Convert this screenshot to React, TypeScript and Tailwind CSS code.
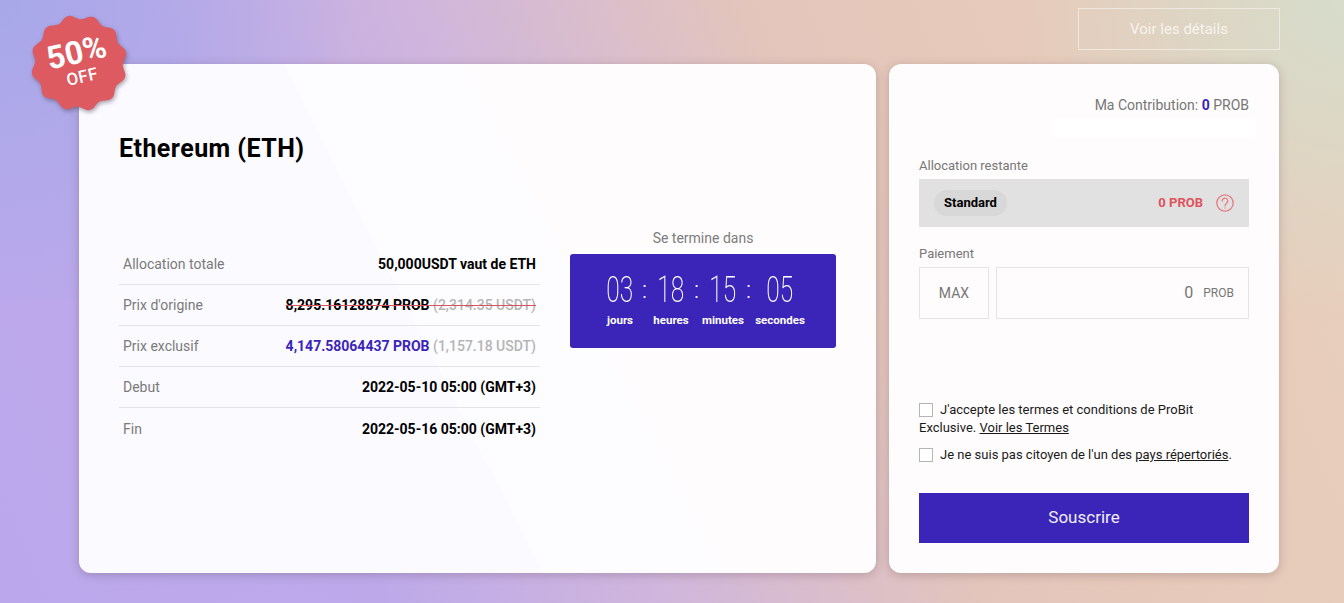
const ROWS = [
  { label: 'Allocation totale', value: <b className="font-bold text-black">50,000USDT vaut de ETH</b> },
  {
    label: "Prix d'origine",
    value: (
      <span className="line-through decoration-[#d9535f]">
        <b className="font-bold text-black">8,295.16128874 PROB</b>{' '}
        <span className="font-medium text-[#b5b5b5]">(2,314.35 USDT)</span>
      </span>
    ),
  },
  {
    label: 'Prix exclusif',
    value: (
      <span>
        <b className="font-bold text-[#3b24b8]">4,147.58064437 PROB</b>{' '}
        <span className="font-medium text-[#b5b5b5]">(1,157.18 USDT)</span>
      </span>
    ),
  },
  { label: 'Debut', value: <b className="font-bold text-black">2022-05-10 05:00 (GMT+3)</b> },
  { label: 'Fin', value: <b className="font-bold text-black">2022-05-16 05:00 (GMT+3)</b> },
];

const TIMER = [
  { num: '03', label: 'jours', width: 'w-[50px]', colon: true },
  { num: '18', label: 'heures', width: 'w-[52px]', colon: true },
  { num: '15', label: 'minutes', width: 'w-[52px]', colon: true },
  { num: '05', label: 'secondes', width: 'w-[62px]', colon: false },
];

// scalloped outline of the discount badge
function badgePath() {
  const pts: string[] = [];
  for (let i = 0; i < 180; i++) {
    const a = (i / 180) * Math.PI * 2;
    const r = 46 + 2.2 * Math.cos(a * 12);
    pts.push(`${(50 + r * Math.cos(a)).toFixed(2)},${(50 + r * Math.sin(a)).toFixed(2)}`);
  }
  return `M${pts.join('L')}Z`;
}

function Badge() {
  return (
    <div className="absolute left-[29px] top-[13px] z-10 h-[100px] w-[100px]">
      <svg viewBox="0 0 100 100" className="h-full w-full drop-shadow-[1px_2px_2px_rgba(60,50,70,0.45)]">
        <path d={badgePath()} fill="#dc5a60" transform="rotate(-13 50 50)" />
      </svg>
      <div className="absolute inset-0 flex -rotate-[13deg] flex-col items-center justify-center pb-[3px] text-white">
        <span className="text-[32px] font-bold leading-[31px]">50%</span>
        <span className="text-[17px] font-medium leading-[19px] tracking-[0.5px]">OFF</span>
      </div>
    </div>
  );
}

function QuestionIcon() {
  return (
    <svg viewBox="0 0 18 18" className="h-[18px] w-[18px]" fill="none" stroke="#e57c83" strokeWidth="1.3" strokeLinecap="round">
      <circle cx="9" cy="9" r="8.2" />
      <path d="M6.2 7.1a2.8 2.8 0 1 1 4.4 2.2c-1 .7-1.6 1.2-1.6 2.4" />
      <path d="M9 13.9v.1" />
    </svg>
  );
}

export default function App() {
  return (
    <div className="relative h-[603px] w-[1344px] overflow-hidden bg-[radial-gradient(circle_at_100%_0%,#d6dccb_0%,rgba(216,220,203,0)_22%),linear-gradient(68deg,#bba8ec_0%,#bda9ea_24%,#d0b6dc_42%,#e3c5bc_62%,#e6c8ba_72%,#e8d0bc_100%)] pl-[79px] pr-[65px] pt-2 font-['Roboto',sans-serif]">
      <div className="pointer-events-none absolute left-0 top-0 h-[300px] w-[400px] bg-[radial-gradient(circle_at_0%_0%,rgba(165,168,232,0.9)_0%,rgba(165,168,232,0)_70%)]" />
      <Badge />

      {/* Top action */}
      <div className="relative mr-[-1px] flex justify-end">
        <button className="h-[42px] w-[202px] border border-[#efe8de] text-[15px] text-[#f7f3ee]">
          Voir les détails
        </button>
      </div>

      <div className="relative mt-[14px] flex h-[509px] gap-[13px]">
        {/* Main card */}
        <div className="flex w-[797px] flex-col rounded-xl bg-[linear-gradient(63deg,#fbfaff_0%,#fbfaff_43.9%,#fdfcff_43.9%,#fdfcff_61%,#fefcfd_61%)] pl-10 pr-10 shadow-[0_2px_10px_rgba(70,50,60,0.25)]">
          <h1 className="mt-[68px] text-[25px] font-bold leading-[34px] tracking-[0.45px] text-black">Ethereum (ETH)</h1>

          <div className="mt-[78px] flex items-start">
            <div className="w-[421px]">
              {ROWS.map((row, i) => (
                <div
                  key={row.label}
                  className={`flex h-[41px] items-center justify-between px-1 text-sm ${i < ROWS.length - 1 ? 'border-b border-[#e4e4e6]' : ''}`}
                >
                  <span className="text-[#7a7a7a]">{row.label}</span>
                  {row.value}
                </div>
              ))}
            </div>

            <div className="ml-[30px] mt-[-15px] w-[266px]">
              <p className="h-[25px] text-center text-sm leading-[19px] text-[#7d7d7d]">Se termine dans</p>
              <div className="h-[94px] rounded-[3px] bg-[#3b24b8] pl-[25px] pt-[17px] text-white">
                <div className="flex">
                  {TIMER.map(t => (
                    <div key={t.label} className={`relative flex flex-col items-center ${t.width}`}>
                      <span className="scale-x-[0.68] text-[36px] font-extralight leading-[38px]">{t.num}</span>
                      <span className="mt-[4px] whitespace-nowrap text-[11.5px] font-bold leading-[14px]">{t.label}</span>
                      {t.colon && (
                        <span className="absolute right-[-2px] top-[3px] text-[24px] font-light leading-[32px]">:</span>
                      )}
                    </div>
                  ))}
                </div>
              </div>
            </div>
          </div>
        </div>

        {/* Subscribe card */}
        <div className="relative flex w-[390px] flex-col rounded-xl bg-[#fefcfc] px-[30px] shadow-[0_2px_10px_rgba(70,50,60,0.25)]">
          <div className="absolute left-[164px] top-[54px] h-[20px] w-[202px] bg-white" />
          <p className="mt-[32px] text-right text-sm leading-[18px] text-[#777]">
            Ma Contribution: <b className="font-bold text-[#3b24b8]">0</b> PROB
          </p>

          <p className="mt-[43px] text-[13px] leading-[18px] text-[#777]">Allocation restante</p>
          <div className="mt-[4px] flex h-[48px] items-center justify-between bg-[#e1e1e1] px-[15px]">
            <span className="flex h-[26px] w-[73px] items-center justify-center rounded-full bg-[#d8d8d8] text-[13px] font-bold text-black">
              Standard
            </span>
            <span className="flex items-center gap-[13px] text-[13px] font-bold text-[#e0525c]">
              0 PROB
              <QuestionIcon />
            </span>
          </div>

          <p className="mt-[18px] text-[13px] leading-[18px] text-[#777]">Paiement</p>
          <div className="mt-[4px] flex h-[52px] gap-[7px]">
            <button className="w-[70px] border border-[#e4e4e4] text-sm text-[#777]">MAX</button>
            <div className="flex flex-1 items-center justify-end border border-[#e4e4e4] pr-[14px] text-[#777]">
              <span className="text-base">0</span>
              <span className="ml-[10px] text-xs">PROB</span>
            </div>
          </div>

          <div className="mt-[82px] text-[13px] leading-[18px] text-[#1a1a1a]">
            <p>
              <span className="mr-[7px] inline-block h-[14px] w-[14px] border border-[#b5b5b5] bg-white align-[-3px]" />
              J'accepte les termes et conditions de ProBit Exclusive. <u>Voir les Termes</u>
            </p>
            <p className="mt-[9px]">
              <span className="mr-[7px] inline-block h-[14px] w-[14px] border border-[#b5b5b5] bg-white align-[-3px]" />
              Je ne suis pas citoyen de l'un des <u>pays répertoriés</u>.
            </p>
          </div>

          <button className="mt-[29px] h-[50px] w-full bg-[#3b24b8] text-[17px] text-[#f1effa]">Souscrire</button>
        </div>
      </div>
    </div>
  );
}
